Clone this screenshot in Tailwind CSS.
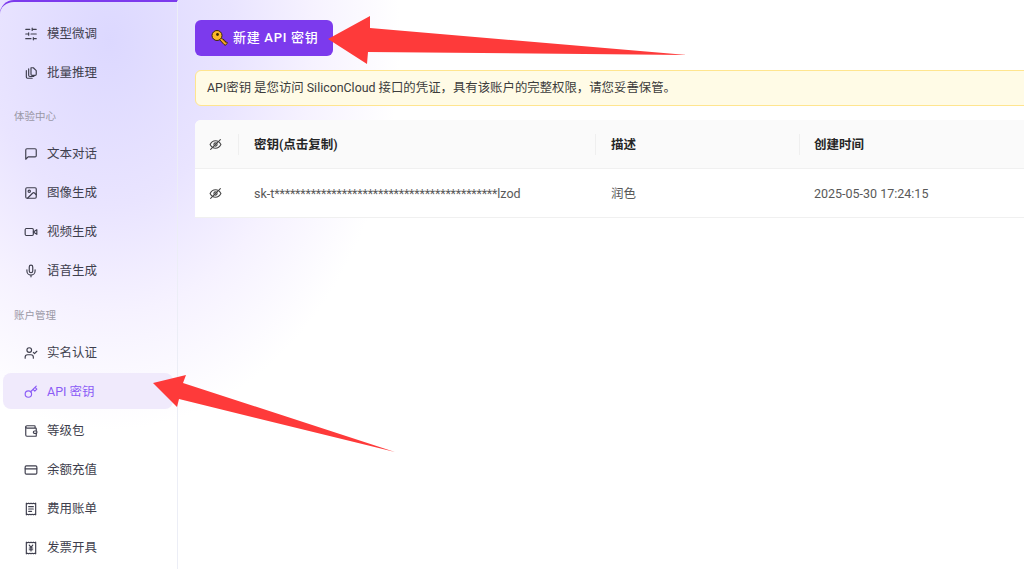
<!DOCTYPE html>
<html lang="zh-CN">
<head>
    <meta charset="UTF-8">
    <title>API 密钥</title>
    <script src="https://cdn.jsdelivr.net/npm/@tailwindcss/browser@4"></script>
</head>
<body class="relative w-[1024px] h-[569px] overflow-hidden bg-white font-['Roboto','Noto_Sans_CJK_SC',sans-serif]">
    <div class="flex h-full bg-[radial-gradient(ellipse_290px_390px_at_110px_40px,#dcd8ff_0%,#e9e4ff_42%,#f6f2ff_70%,#ffffff_100%)]">
        <!-- Sidebar -->
        <aside class="w-[178px] h-full shrink-0 overflow-hidden pt-[13px] rounded-tl-[14px] border-t-2 border-t-[#7c3aed] border-r border-r-[#eceef6] text-[12.5px] text-[#3f3f4e]">
            <a class="ml-[3px] mb-[3px] w-[170px] h-9 pl-[21px] pt-[2px] flex items-center gap-[9px] rounded-lg">
                <svg class="w-[14px] h-[14px]" viewBox="0 0 24 24" fill="none" stroke="currentColor" stroke-width="2" stroke-linecap="round"><path d="M21 4h-7M10 4H3M21 12h-9M8 12H3M21 20h-5M12 20H3M14 2v4M8 10v4M16 18v4"/></svg>
                <span>模型微调</span>
            </a>
            <a class="ml-[3px] mb-[3px] w-[170px] h-9 pl-[21px] pt-[2px] flex items-center gap-[9px] rounded-lg">
                <svg class="w-[14px] h-[14px]" viewBox="0 0 24 24" fill="none" stroke="currentColor" stroke-width="2" stroke-linecap="round" stroke-linejoin="round"><path d="M4 8v11a2 2 0 0 0 2 2h8"/><path d="M8 5v11a2 2 0 0 0 2 2h7"/><path d="M12 3h4l5 5v6a2 2 0 0 1-2 2h-5a2 2 0 0 1-2-2z"/></svg>
                <span>批量推理</span>
            </a>
            <div class="h-[42px] pt-[6px] pl-[14px] flex items-center text-[10.5px] text-[#9a98a6]">体验中心</div>
            <a class="ml-[3px] mb-[3px] w-[170px] h-9 pl-[21px] pt-[2px] flex items-center gap-[9px] rounded-lg">
                <svg class="w-[14px] h-[14px]" viewBox="0 0 24 24" fill="none" stroke="currentColor" stroke-width="2" stroke-linecap="round" stroke-linejoin="round"><path d="M21 15a2 2 0 0 1-2 2H7l-4 4V5a2 2 0 0 1 2-2h14a2 2 0 0 1 2 2z"/></svg>
                <span>文本对话</span>
            </a>
            <a class="ml-[3px] mb-[3px] w-[170px] h-9 pl-[21px] pt-[2px] flex items-center gap-[9px] rounded-lg">
                <svg class="w-[14px] h-[14px]" viewBox="0 0 24 24" fill="none" stroke="currentColor" stroke-width="2" stroke-linecap="round" stroke-linejoin="round"><rect x="3" y="3" width="18" height="18" rx="2"/><circle cx="9" cy="9" r="2"/><path d="m21 15-3-3a2 2 0 0 0-3 0L6 21"/></svg>
                <span>图像生成</span>
            </a>
            <a class="ml-[3px] mb-[3px] w-[170px] h-9 pl-[21px] pt-[2px] flex items-center gap-[9px] rounded-lg">
                <svg class="w-[14px] h-[14px]" viewBox="0 0 24 24" fill="none" stroke="currentColor" stroke-width="2" stroke-linecap="round" stroke-linejoin="round"><rect x="2" y="6" width="14" height="12" rx="2"/><path d="m22 8-6 4 6 4z"/></svg>
                <span>视频生成</span>
            </a>
            <a class="ml-[3px] mb-[3px] w-[170px] h-9 pl-[21px] pt-[2px] flex items-center gap-[9px] rounded-lg">
                <svg class="w-[14px] h-[14px]" viewBox="0 0 24 24" fill="none" stroke="currentColor" stroke-width="2" stroke-linecap="round" stroke-linejoin="round"><path d="M12 2a3 3 0 0 0-3 3v7a3 3 0 0 0 6 0V5a3 3 0 0 0-3-3z"/><path d="M19 10v2a7 7 0 0 1-14 0v-2M12 19v3"/></svg>
                <span>语音生成</span>
            </a>
            <div class="h-[43px] pt-[7px] pl-[14px] flex items-center text-[10.5px] text-[#9a98a6]">账户管理</div>
            <a class="ml-[3px] mb-[3px] w-[170px] h-9 pl-[21px] pt-[2px] flex items-center gap-[9px] rounded-lg">
                <svg class="w-[14px] h-[14px]" viewBox="0 0 24 24" fill="none" stroke="currentColor" stroke-width="2" stroke-linecap="round" stroke-linejoin="round"><path d="M16 21v-2a4 4 0 0 0-4-4H6a4 4 0 0 0-4 4v2"/><circle cx="9" cy="7" r="4"/><path d="m16 11 2 2 4-4"/></svg>
                <span>实名认证</span>
            </a>
            <a class="ml-[3px] mb-[3px] w-[170px] h-9 pl-[21px] pt-[2px] flex items-center gap-[9px] rounded-lg bg-[#f0eafc] text-[#8b5cf6]">
                <svg class="w-[14px] h-[14px]" viewBox="0 0 24 24" fill="none" stroke="currentColor" stroke-width="2" stroke-linecap="round" stroke-linejoin="round"><circle cx="7.5" cy="15.5" r="5.5"/><path d="m21 2-9.6 9.6M15.5 7.5l3 3L22 7l-3-3"/></svg>
                <span>API 密钥</span>
            </a>
            <a class="ml-[3px] mb-[3px] w-[170px] h-9 pl-[21px] pt-[2px] flex items-center gap-[9px] rounded-lg">
                <svg class="w-[14px] h-[14px]" viewBox="0 0 24 24" fill="none" stroke="currentColor" stroke-width="2" stroke-linecap="round" stroke-linejoin="round"><path d="M19 7V4a1 1 0 0 0-1-1H5a2 2 0 0 0 0 4h15a1 1 0 0 1 1 1v4h-3a2 2 0 0 0 0 4h3a1 1 0 0 0 1-1v-2a1 1 0 0 0-1-1"/><path d="M3 5v14a2 2 0 0 0 2 2h15a1 1 0 0 0 1-1v-4"/></svg>
                <span>等级包</span>
            </a>
            <a class="ml-[3px] mb-[3px] w-[170px] h-9 pl-[21px] pt-[2px] flex items-center gap-[9px] rounded-lg">
                <svg class="w-[14px] h-[14px]" viewBox="0 0 24 24" fill="none" stroke="currentColor" stroke-width="2" stroke-linecap="round" stroke-linejoin="round"><rect x="2" y="5" width="20" height="14" rx="2"/><path d="M2 10h20"/></svg>
                <span>余额充值</span>
            </a>
            <a class="ml-[3px] mb-[3px] w-[170px] h-9 pl-[21px] pt-[2px] flex items-center gap-[9px] rounded-lg">
                <svg class="w-[14px] h-[14px]" viewBox="0 0 24 24" fill="none" stroke="currentColor" stroke-width="2" stroke-linecap="round" stroke-linejoin="round"><path d="M4 2v20l2-1 2 1 2-1 2 1 2-1 2 1 2-1 2 1V2l-2 1-2-1-2 1-2-1-2 1-2-1-2 1z"/><path d="M8 8h8M8 12h8M8 16h5"/></svg>
                <span>费用账单</span>
            </a>
            <a class="ml-[3px] mb-[3px] w-[170px] h-9 pl-[21px] pt-[2px] flex items-center gap-[9px] rounded-lg">
                <svg class="w-[14px] h-[14px]" viewBox="0 0 24 24" fill="none" stroke="currentColor" stroke-width="2" stroke-linecap="round" stroke-linejoin="round"><path d="M4 2v20l2-1 2 1 2-1 2 1 2-1 2 1 2-1 2 1V2l-2 1-2-1-2 1-2-1-2 1-2-1-2 1z"/><path d="m9 7 3 4 3-4M12 11v6M9 12h6M9 15h6"/></svg>
                <span>发票开具</span>
            </a>
        </aside>

        <!-- Main -->
        <main class="flex-1 min-w-0 pl-[17px] pt-5 overflow-hidden">
            <button class="w-[138px] h-9 pl-[16px] flex items-center gap-[4px] rounded-md bg-[#7c3aed] text-white text-[13px] font-medium tracking-[0.7px]">
                <svg class="w-[18px] h-[18px]" viewBox="0 0 18 18">
                    <path d="M7.500 9.500 13 15.500l1.200.8 2.300-2.100-.9-1.200-1.100.2-.2-1.200-1.200-.2-.1-1.100-1.100-.2-2.400-2.400z" fill="#f5a623" stroke="#3f2a00" stroke-width="1" stroke-linejoin="round"/>
                    <circle cx="6" cy="6.500" r="5" fill="#fbb829" stroke="#3f2a00" stroke-width="1"/>
                    <circle cx="6.500" cy="5.500" r="1.400" fill="#3f2a00"/>
                </svg>
                <span>新建 API 密钥</span>
            </button>

            <div class="w-[900px] h-9 mt-[14px] pl-[11px] flex items-center rounded-md border border-[#ffe58f] bg-[#fffbe6] text-[12.4px] text-[#3c3c3c]">API密钥 是您访问 SiliconCloud 接口的凭证，具有该账户的完整权限，请您妥善保管。</div>

            <div class="w-[900px] mt-[14px] rounded-t-md overflow-hidden bg-white text-[12.5px]">
                <div class="grid grid-cols-[44px_357px_204px_1fr] h-[49px] items-center bg-[#fafafa] border-b border-[#f0f0f0] font-semibold text-[#262626]">
                    <div class="h-[21px] pr-[3px] flex items-center justify-center border-r border-[#efefef]">
                        <svg class="w-[13px] h-[13px] text-[#444]" viewBox="0 0 24 24" fill="none" stroke="currentColor" stroke-width="2" stroke-linecap="round" stroke-linejoin="round"><path d="M2 12s3.500-7 10-7 10 7 10 7-3.500 7-10 7-10-7-10-7z"/><circle cx="12" cy="12" r="3"/><path d="m3 21 18-18"/></svg>
                    </div>
                    <div class="h-[21px] pl-[15px] pt-[2px] flex items-center border-r border-[#efefef]">密钥(点击复制)</div>
                    <div class="h-[21px] pl-[15px] pt-[2px] flex items-center border-r border-[#efefef]">描述</div>
                    <div class="h-[21px] pl-[14px] pt-[2px] flex items-center">创建时间</div>
                </div>
                <div class="grid grid-cols-[44px_357px_204px_1fr] h-[49px] items-center border-b border-[#f0f0f0] text-[#595959]">
                    <div class="pr-[3px] flex items-center justify-center">
                        <svg class="w-[13px] h-[13px] text-[#444]" viewBox="0 0 24 24" fill="none" stroke="currentColor" stroke-width="2" stroke-linecap="round" stroke-linejoin="round"><path d="M2 12s3.500-7 10-7 10 7 10 7-3.500 7-10 7-10-7-10-7z"/><circle cx="12" cy="12" r="3"/><path d="m3 21 18-18"/></svg>
                    </div>
                    <div class="pl-[15px] pt-[2px]">sk-t<span class="tracking-[-0.2px]">*******************************************</span>lzod</div>
                    <div class="pl-[15px] pt-[2px]">润色</div>
                    <div class="pl-[14px] pt-[2px]">2025-05-30 17:24:15</div>
                </div>
            </div>
        </main>
    </div>

    <!-- Annotation arrows over the screenshot -->
    <svg class="absolute inset-0 pointer-events-none" width="1024" height="569" viewBox="0 0 1024 569">
        <polygon points="328,39 370,16 370,28 687,55 368,52 367,64" fill="#fe3a3a"/>
        <polygon points="153,383 186,375 183,383 395,452 179,399 177,407" fill="#fe3a3a"/>
    </svg>
</body>
</html>
